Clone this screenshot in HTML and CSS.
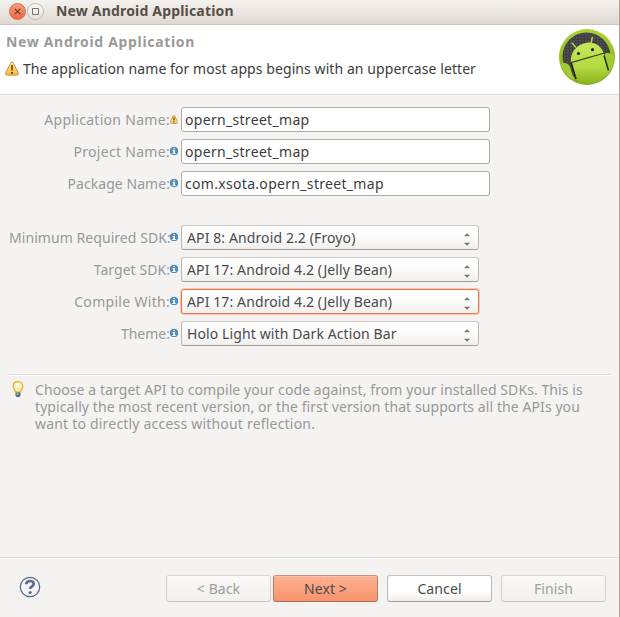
FILE: index.html
```html
<!DOCTYPE html>
<html lang="en">
<head>
<meta charset="utf-8">
<title>New Android Application</title>
<link rel="stylesheet" href="styles.css">
</head>
<body>
<svg width="0" height="0" class="defs" aria-hidden="true">
  <defs>
    <linearGradient id="amber" x1="0" y1="0" x2="0" y2="1"><stop offset="0" stop-color="#fff0b0"/><stop offset="1" stop-color="#ffb52d"/></linearGradient>
    <linearGradient id="robot" gradientUnits="userSpaceOnUse" x1="0" y1="14" x2="0" y2="57"><stop offset="0" stop-color="#c9ea5c"/><stop offset=".6" stop-color="#b2d83f"/><stop offset="1" stop-color="#88b01b"/></linearGradient>
    <linearGradient id="rim" x1="0" y1="0" x2="0" y2="1"><stop offset="0" stop-color="#acd336"/><stop offset="1" stop-color="#7ca615"/></linearGradient>
    <pattern id="mesh" width="3" height="3" patternUnits="userSpaceOnUse"><rect width="3" height="3" fill="#404042"/><rect width="1.500" height="1.500" fill="#565658"/></pattern>
    <clipPath id="disc"><circle cx="29" cy="29" r="27"/></clipPath>
    <symbol id="info" viewBox="0 0 8 8"><path d="M2 0h4l2 2v4L6 8H2L0 6V2z" fill="#4d8cbc"/><path d="M3.500 1h1.300v1.200H3.500zM2.500 3h2.500v3h.8v1H2.300V6h1V4h-.8z" fill="#fff"/></symbol>
    <symbol id="warn" viewBox="0 0 14 15"><path d="M7 1.100c.7 0 1.100.6 1.500 1.400l4.600 9c.6 1.500.2 2.600-1.200 2.600H2.100C.7 14.100.3 13 .9 11.500l4.600-9C5.900 1.700 6.300 1.100 7 1.100z" fill="url(#amber)" stroke="#c28a3a"/><path d="M6 4.200h2l-.4 5.600H6.400zM6 11h2v1.700H6z" fill="#6b3c08"/></symbol>
    <symbol id="warn-small" viewBox="0 0 8 9"><path d="M4 .6c.6 0 .9.5 1.200 1.200l2.200 4.700c.4 1 .2 1.900-.8 1.900H1.400c-1 0-1.200-.9-.8-1.900l2.200-4.700C3.100 1.100 3.400.6 4 .6z" fill="#ffd878" stroke="#c98f3c" stroke-width=".9"/><path d="M3.400 2.500h1.200v3H3.400zM3.400 6.300h1.200v1.200H3.400z" fill="#6b3c08"/></symbol>
    <symbol id="arrows" viewBox="0 0 6 13"><path d="M0 3.200L3 .2l3 3zM0 9.800h6l-3 3z" fill="#77736f"/></symbol>
  </defs>
</svg>
<div class="window">
  <div class="titlebar">
    <div class="controls">
      <span class="ctl close"><svg width="7" height="7" viewBox="0 0 7 7"><path d="M.8.8l5.400 5.400M6.200.8L.8 6.200" stroke="#66362a" stroke-width="1.100"/></svg></span>
      <span class="ctl max"><svg width="7" height="7" viewBox="0 0 7 7"><path d="M.5.5h6v6h-6z" fill="none" stroke="#77736c"/></svg></span>
    </div>
    <span class="title">New Android Application</span>
  </div>
  <div class="header">
    <div class="headtext">
      <h1>New Android Application</h1>
      <p class="message"><svg width="14" height="15"><use href="#warn"/></svg><span>The application name for most apps begins with an uppercase letter</span></p>
    </div>
    <svg class="logo" width="58" height="58" viewBox="0 0 58 58">
      <circle cx="29" cy="29" r="28" fill="url(#rim)"/>
      <circle cx="28.500" cy="28.500" r="24" fill="url(#mesh)"/>
      <g clip-path="url(#disc)">
        <path d="M3 36c3-2 8-1 9 3l6 18H3zM46.500 26c2-2 7-1 9.500 2v14l-6 5z" fill="#a3cb33"/>
        <path d="M13 34c-1-9 5-17 14.500-19S44 19 45.800 25.500L52 47 38 58H21z" fill="url(#robot)"/>
        <path d="M13 34.700L46.500 25" fill="none" stroke="#34420c" stroke-width="1.200"/>
        <path d="M13.300 35l4.700 16M46 27.500l4.500 15" fill="none" stroke="#1f280a" stroke-width="1.500"/>
      </g>
      <path d="M17.500 19L14 15M33 15.500l1.300-6" stroke="#b9dc4c" stroke-width="1.400" stroke-linecap="round"/>
      <circle cx="20.500" cy="25.500" r="1.600" fill="#252b1b"/><circle cx="34.500" cy="21.700" r="1.600" fill="#252b1b"/>
    </svg>
  </div>
  <div class="content">
    <div class="form">
      <div class="row"><label class="t-app">Application Name:</label><svg class="deco" width="8" height="9"><use href="#warn-small"/></svg><div class="input">opern_street_map</div></div>
      <div class="row"><label class="t-project">Project Name:</label><svg class="deco" width="8" height="8"><use href="#info"/></svg><div class="input">opern_street_map</div></div>
      <div class="row"><label>Package Name:</label><svg class="deco" width="8" height="8"><use href="#info"/></svg><div class="input">com.xsota.opern_street_map</div></div>
    </div>
    <div class="form sdk">
      <div class="row"><label>Minimum Required SDK:</label><svg class="deco" width="8" height="8"><use href="#info"/></svg><div class="combo"><span>API 8: Android 2.2 (Froyo)</span><svg width="6" height="13"><use href="#arrows"/></svg></div></div>
      <div class="row"><label>Target SDK:</label><svg class="deco" width="8" height="8"><use href="#info"/></svg><div class="combo"><span>API 17: Android 4.2 (Jelly Bean)</span><svg width="6" height="13"><use href="#arrows"/></svg></div></div>
      <div class="row"><label class="t-compile">Compile With:</label><svg class="deco" width="8" height="8"><use href="#info"/></svg><div class="combo focused"><span>API 17: Android 4.2 (Jelly Bean)</span><svg width="6" height="13"><use href="#arrows"/></svg></div></div>
      <div class="row"><label class="t-theme">Theme:</label><svg class="deco" width="8" height="8"><use href="#info"/></svg><div class="combo"><span>Holo Light with Dark Action Bar</span><svg width="6" height="13"><use href="#arrows"/></svg></div></div>
    </div>
    <div class="hint">
      <svg width="12" height="17" viewBox="0 0 12 17"><path d="M6 .7c3 0 4.800 2 4.800 4.500 0 2.300-1.800 3.500-2.300 5.800h-5C3 8.700 1.200 7.500 1.200 5.200 1.200 2.700 3 .7 6 .7z" fill="#fff2b5" stroke="#eaae32" stroke-width="1.300"/><path d="M4 2.500h3v3H4z" fill="#fffdf0"/><path d="M6 7v4" fill="none" stroke="#f7cf68"/><path d="M3.500 11.500h5v3L7.500 16h-3l-1-1.500z" fill="#526b8c"/><path d="M4.500 12.500h2v1h-2z" fill="#e0eaf4"/></svg>
      <p><span>Choose a target API to compile your code against, from your installed SDKs. This is</span><span>typically the most recent version, or the first version that supports all the APIs you</span><span class="last">want to directly access without reflection.</span></p>
    </div>
  </div>
  <div class="footer">
    <svg class="help" width="22" height="22" viewBox="0 0 22 22"><circle cx="11" cy="11" r="9.700" fill="#f5f5f6" stroke="#53698e" stroke-width="1.200"/><path d="M7.300 8.300C7.300 5.900 9 5 11 5c2.200 0 3.700 1.100 3.700 2.900 0 2.400-3.500 2.500-3.500 5" fill="none" stroke="#5b6d90" stroke-width="2.700"/><circle cx="11.100" cy="16.500" r="1.600" fill="#53698e"/></svg>
    <div class="buttons">
      <div class="btn disabled">&lt; Back</div>
      <div class="btn primary">Next &gt;</div>
      <div class="btn">Cancel</div>
      <div class="btn disabled">Finish</div>
    </div>
  </div>
</div>
</body>
</html>
```
FILE: styles.css
```css
* { box-sizing: border-box; }
body { margin: 0; font: 14px/17px "Noto Sans", sans-serif; color: #3c3c3c; }
svg { display: block; flex: none; }
.defs { position: absolute; }
h1, p { margin: 0; }
.window { width: 620px; height: 617px; display: flex; flex-direction: column; background: #f5f3f2; border-right: 1px solid #b0a49b; white-space: nowrap; overflow: hidden; }
.titlebar { height: 25px; flex: none; display: flex; align-items: center; padding: 0 0 2px 9px; background: linear-gradient(#f4f2ef, #dfd8d1); border-bottom: 1px solid #cfc2b8; }
.controls { display: flex; gap: 1px; width: 47px; }
.ctl { width: 17px; height: 17px; border-radius: 50%; display: grid; place-items: center; border: 1px solid #c4bdb5; background: linear-gradient(#faf9f8, #e6e2dd); }
.close { border-color: #cf7457; background: linear-gradient(#f99a78, #ee6840); }
.title { font-weight: 700; color: #55504a; letter-spacing: .18px; margin-top: -1px; }
.header { height: 70px; flex: none; display: flex; justify-content: space-between; background: #fff; border-bottom: 1px solid #dddad8; padding: 3px 3px 0 5px; }
.headtext { padding-top: 5px; }
h1 { font-size: 14px; line-height: 17px; color: #9a9a9a; padding-left: 1px; letter-spacing: .67px; }
.message { display: flex; align-items: center; gap: 4px; margin-top: 9px; height: 19px; letter-spacing: .08px; }
.content { flex: 1; padding: 12px 9px 0; }
.form { display: grid; gap: 7px; }
.row { display: grid; grid-template-columns: 161px 8px auto; align-items: center; justify-content: start; height: 25px; }
.deco { margin-top: -1px; }
label { text-align: right; color: #9a9795; letter-spacing: .06px; }
.t-app, .t-project, .t-compile { letter-spacing: .3px; }
.t-theme { letter-spacing: 0; }
.input, .combo { margin-left: 3px; height: 25px; border: 1px solid #b5aaa0; border-radius: 3px; }
.input { width: 309px; background: #fff; padding: 3px; letter-spacing: .31px; }
.combo { width: 298px; display: flex; align-items: center; justify-content: space-between; padding: 0 8px 0 5px; border-color: #cfc8c2 #bfb6ae #a99e95; background: linear-gradient(#fff, #fcfbfb 50%, #f1efed); color: #4a4a4a; letter-spacing: .11px; }
.combo svg { margin-top: 3px; }
.focused { border-color: #ee764c; box-shadow: 0 0 0 1px #f8c9b5; }
.sdk { margin-top: 29px; }
.hint { display: flex; margin-top: 28px; padding: 6px 0 0 3px; border-top: 1px solid #dcdad8; box-shadow: inset 0 1px #fff; color: #9a9795; width: 601px; letter-spacing: .08px; }
.hint p { margin-left: 11px; }
.hint span { display: block; height: 17px; }
.hint .last { letter-spacing: .2px; }
.footer { height: 60px; flex: none; display: flex; justify-content: space-between; padding: 17px 13px 0 19px; border-top: 1px solid #dcdad8; box-shadow: inset 0 1px #fbfafa; }
.help { margin-top: 1px; }
.buttons { display: flex; gap: 9px; }
.btn { width: 105px; height: 27px; padding-bottom: 1px; border: 1px solid; border-color: #c9c1ba #bfb6ae #a99e95; border-radius: 3px; display: grid; place-items: center; background: linear-gradient(#fff 60%, #f1efed); color: #4a4a4a; letter-spacing: .1px; }
.disabled { background: linear-gradient(#faf9f8, #f2efed); border-color: #dcd6d1 #d5cec8 #cdc4be; color: #a09d9b; }
.primary { margin-left: -7px; background: linear-gradient(#ffb193, #f7936c); border-color: #cb8e75 #b87b64 #ab6c55; box-shadow: inset 0 1px #ffc3aa; }
```
